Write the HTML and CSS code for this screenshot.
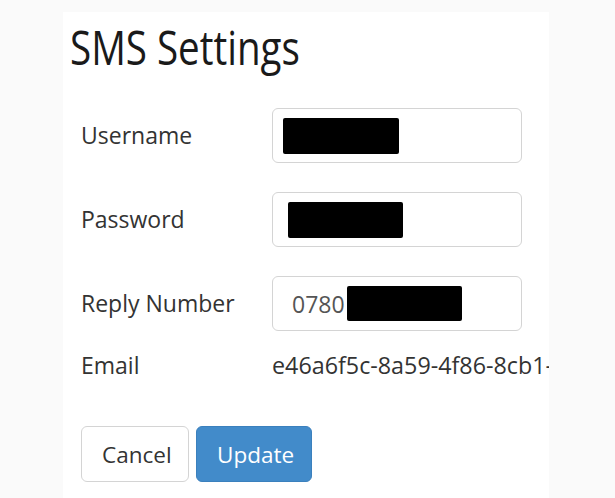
FILE: index.html
```html
<!DOCTYPE html>
<html>
<head>
<meta charset="utf-8">
<link rel="stylesheet" href="styles.css">
</head>
<body>
<div class="panel">
  <h2 class="title">SMS Settings</h2>
  <form class="form">
    <div class="row">
      <label class="label">Username</label>
      <div class="input"><span class="redact redact-user"></span></div>
    </div>
    <div class="row">
      <label class="label">Password</label>
      <div class="input"><span class="redact redact-pass"></span></div>
    </div>
    <div class="row">
      <label class="label">Reply Number</label>
      <div class="input"><span class="value">0780</span><span class="redact redact-num"></span></div>
    </div>
    <div class="row row-static">
      <label class="label">Email</label>
      <div class="static">e46a6f5c-8a59-4f86-8cb1-4a2e</div>
    </div>
    <div class="actions">
      <button type="button" class="btn btn-default">Cancel</button>
      <button type="button" class="btn btn-primary">Update</button>
    </div>
  </form>
</div>
</body>
</html>
```
FILE: styles.css
```css
html, body {
  margin: 0;
  padding: 0;
  background: #fafafa;
  width: 615px;
  height: 498px;
  overflow: hidden;
}
body {
  font-family: "Open Sans", "DejaVu Sans", sans-serif;
  color: #333;
}
.panel {
  margin: 12px 0 0 63px;
  width: 486px;
  height: 486px;
  background: #fff;
  overflow: hidden;
  white-space: nowrap;
}
.title {
  margin: 0;
  padding: 2px 0 0 7px;
  height: 67px;
  font-size: 47px;
  font-weight: 400;
  line-height: 67px;
  color: #1a1a1a;
  transform: scaleX(0.82);
  transform-origin: 7px 0;
}
.form {
  padding: 27px 0 0 18px;
}
.row {
  display: flex;
  align-items: center;
  height: 55px;
  margin-bottom: 29px;
}
.label {
  width: 191px;
  flex: none;
  font-size: 23px;
  line-height: 31px;
  color: #333;
}
.input {
  flex: none;
  box-sizing: border-box;
  width: 250px;
  height: 55px;
  border: 1.5px solid #d4d4d4;
  border-radius: 6px;
  background: #fff;
  display: flex;
  align-items: center;
  padding-left: 10px;
}
.value {
  font-size: 23px;
  color: #555;
  padding-left: 9px;
}
.redact {
  display: block;
  background: #000;
  border-radius: 2px;
  height: 36px;
}
.redact-user { width: 116px; }
.redact-pass { width: 115px; margin-left: 5px; }
.redact-num { width: 115px; margin-left: 2px; height: 35px; }
.row-static {
  height: 31px;
  margin-top: -10px;
  margin-bottom: 45px;
}
.static {
  font-size: 23.3px;
  line-height: 31px;
  color: #333;
}
.actions {
  display: flex;
  gap: 7px;
}
.btn {
  box-sizing: border-box;
  height: 56px;
  border-radius: 6px;
  font-family: "Open Sans", "DejaVu Sans", sans-serif;
  font-size: 22.5px;
  padding: 0 20px;
  cursor: pointer;
}
.btn-default {
  width: 108px;
  background: #fff;
  border: 1.5px solid #d4d4d4;
  color: #333;
}
.btn-primary {
  width: 116px;
  background: #428bca;
  border: 1.5px solid #3b80bd;
  color: #fff;
}
```
